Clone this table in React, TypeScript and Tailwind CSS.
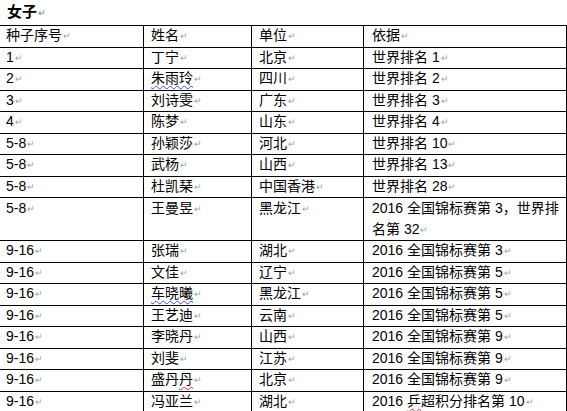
type Cell = { text: React.ReactNode };

const rows: [string, React.ReactNode, string, React.ReactNode][] = [
  ["1", "丁宁", "北京", "世界排名 1"],
  [
    "2",
    <span className="underline decoration-wavy decoration-[#3b4fd6] decoration-1 underline-offset-2">朱雨玲</span>,
    "四川",
    "世界排名 2",
  ],
  ["3", "刘诗雯", "广东", "世界排名 3"],
  ["4", "陈梦", "山东", "世界排名 4"],
  ["5-8", "孙颖莎", "河北", "世界排名 10"],
  ["5-8", "武杨", "山西", "世界排名 13"],
  ["5-8", "杜凯琹", "中国香港", "世界排名 28"],
];

const rows2: [string, React.ReactNode, string, React.ReactNode][] = [
  ["9-16", "张瑞", "湖北", "2016 全国锦标赛第 3"],
  ["9-16", "文佳", "辽宁", "2016 全国锦标赛第 5"],
  [
    "9-16",
    <span className="underline decoration-wavy decoration-[#3b4fd6] decoration-1 underline-offset-2">车晓曦</span>,
    "黑龙江",
    "2016 全国锦标赛第 5",
  ],
  ["9-16", "王艺迪", "云南", "2016 全国锦标赛第 5"],
  ["9-16", "李晓丹", "山西", "2016 全国锦标赛第 9"],
  ["9-16", "刘斐", "江苏", "2016 全国锦标赛第 9"],
  [
    "9-16",
    <>
      盛丹<span className="underline decoration-wavy decoration-[#e03030] decoration-1 underline-offset-2">丹</span>
    </>,
    "北京",
    "2016 全国锦标赛第 9",
  ],
  [
    "9-16",
    "冯亚兰",
    "湖北",
    <>
      2016 <span className="underline decoration-wavy decoration-[#e03030] decoration-1 underline-offset-2">乒</span>超积分排名第 10
    </>,
  ],
];

function Mark() {
  return <span className="text-[9px] text-gray-400 ml-[1px] align-middle">↵</span>;
}

function Row({ cells, tall }: { cells: React.ReactNode[]; tall?: boolean }) {
  const widths = ["w-[144px] pl-[6px]", "w-[108px] pl-[7px]", "w-[112px] pl-[7px]", "w-[203px] pl-[8px]"];
  return (
    <div className={`flex border-b border-black ${tall ? "h-[43px]" : "h-[21.5px]"}`}>
      {cells.map((c, i) => (
        <div
          key={i}
          className={`${widths[i]} shrink-0 border-r border-black whitespace-nowrap leading-[21px] ${tall ? "" : "flex items-center"}`}
        >
          <span>
            {c}
            <Mark />
          </span>
        </div>
      ))}
    </div>
  );
}

export default function App() {
  return (
    <div
      className="w-[567px] h-[411px] overflow-hidden bg-white text-black text-[14px]"
      style={{ fontFamily: '"Liberation Sans", "Noto Sans CJK SC", sans-serif' }}
    >
      <div className="h-[25px] pl-[7px] pt-[3px] font-bold text-[15px] leading-[18px]">
        女子<Mark />
      </div>
      <div className="border-t border-black w-[567px]">
        <Row cells={["种子序号", "姓名", "单位", "依据"]} />
        {rows.map((r, i) => (
          <Row key={i} cells={r} />
        ))}
        <Row
          tall
          cells={[
            "5-8",
            "王曼昱",
            "黑龙江",
            <>
              2016 全国锦标赛第 3，世界排
              <br />
              名第 32
            </>,
          ]}
        />
        {rows2.map((r, i) => (
          <Row key={i} cells={r} />
        ))}
      </div>
    </div>
  );
}
